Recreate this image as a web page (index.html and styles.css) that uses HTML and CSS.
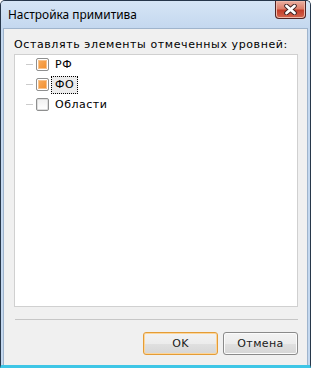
FILE: index.html
```html
<html>
    <head>
        <link rel="stylesheet" href="styles.css">
    </head>
    <body>
        <div class="window">
            <div class="titlebar">
                <div class="caption">Настройка примитива</div>
                <div class="close" title="close">
                    <svg width="15" height="11" viewBox="0 0 15 11">
                        <path d="M3.5 2 L11.5 9 M11.5 2 L3.5 9" stroke="#3d2222" stroke-width="4.6" stroke-linecap="round"/>
                        <path d="M3.5 2 L11.5 9 M11.5 2 L3.5 9" stroke="#ffffff" stroke-width="2.8" stroke-linecap="round"/>
                    </svg>
                </div>
            </div>
            <div class="client">
                <div class="label">Оставлять элементы отмеченных уровней:</div>
                <div class="tree">
                    <div class="node">
                        <span class="branch"></span>
                        <span class="check checked"></span>
                        <span class="text">РФ</span>
                    </div>
                    <div class="node">
                        <span class="branch"></span>
                        <span class="check checked"></span>
                        <span class="text focused">ФО</span>
                    </div>
                    <div class="node">
                        <span class="branch"></span>
                        <span class="check"></span>
                        <span class="text">Области</span>
                    </div>
                </div>
                <div class="separator"></div>
                <div class="buttons">
                    <input type="button" class="btn default" value="OK">
                    <input type="button" class="btn" value="Отмена">
                </div>
            </div>
        </div>
    </body>
</html>
```

FILE: styles.css
```css
:root {
    --c-frame: #c4d8ef;
    --c-frame-dark: #27374a;
    --c-client: #f0f0f0;
    --c-line: #d0d0d0;
    --f-ui: "DejaVu Sans", "Noto Sans", sans-serif;
}
html, body {
    margin: 0;
    padding: 0;
}

body {
    background-color: #ffffff;
}

.window {
    box-sizing: border-box;
    width: 311px;
    height: 368px;
    display: flex;
    flex-direction: column;
    background: var(--c-frame);
    border: 1px solid var(--c-frame-dark);
    border-bottom: 3px solid #3ec6e6;
    border-radius: 5px 5px 0 0;
    padding: 0 2px;
}

.titlebar {
    display: flex;
    height: 27px;
    flex-shrink: 0;
    background: linear-gradient(#d6e5f5, #c4d8ef);
    margin: 0 -2px;
    padding: 0 4px 0 7px;
    border-radius: 4px 4px 0 0;
}
.titlebar .caption {
    flex-grow: 1;
    font-family: "Noto Sans", "Open Sans", sans-serif;
    font-size: 11.9px;
    line-height: 26px;
    color: #000000;
}
.titlebar .close {
    box-sizing: border-box;
    width: 31px;
    height: 18px;
    display: flex;
    align-items: center;
    justify-content: center;
    border: 1px solid #4f2424;
    border-top: 0;
    border-radius: 0 0 4px 4px;
    background: linear-gradient(#eab0a2 0%, #dc7f6a 45%, #c43f2b 55%, #d2664f 100%);
    box-shadow: inset 0 0 0 1px #efb9aa;
}

.client {
    flex-grow: 1;
    display: flex;
    flex-direction: column;
    background: var(--c-client);
    border: 1px solid #9fb4cc;
    border-bottom: 0;
    padding: 9px 9px 10px 10px;
    font-family: var(--f-ui);
    font-size: 11px;
    color: #000000;
}

.label {
    height: 13px;
    line-height: 13px;
    margin-bottom: 3px;
    letter-spacing: 0.6px;
}

.tree {
    height: 251px;
    background: #ffffff;
    border: 1px solid var(--c-line);
}
.tree .node {
    display: flex;
    align-items: flex-start;
    height: 20px;
}
.tree .branch {
    width: 7px;
    height: 0;
    margin: 9px 0 0 11px;
    border-top: 1px solid #cccccc;
}
.tree .check {
    box-sizing: border-box;
    width: 13px;
    height: 13px;
    margin: 3px 0 0 3px;
    border: 1px solid #8e8f8f;
    border-radius: 2px;
    background: linear-gradient(#f0f0f0, #ffffff);
    box-shadow: inset 0 0 0 1px #dedede;
}
.tree .check.checked {
    background: linear-gradient(135deg, #fbb064, #f08a26);
    box-shadow: inset 0 0 0 1px #ffffff, inset 0 0 0 2px #f7c28c;
}
.tree .text {
    box-sizing: border-box;
    margin: 1px 0 0 2px;
    padding: 0 3px;
    height: 18px;
    line-height: 16px;
    letter-spacing: 0.5px;
    border: 1px dotted transparent;
}
.tree .text.focused {
    background: #ececec;
    border-color: #000000;
}

.separator {
    margin: 12px 0 0 1px;
    border-top: 1px solid #c6c6c6;
}

.buttons {
    display: flex;
    justify-content: flex-end;
    gap: 5px;
    margin-top: 12px;
}
.btn {
    box-sizing: border-box;
    width: 75px;
    height: 23px;
    padding: 0;
    margin: 0;
    font-family: var(--f-ui);
    font-size: 11px;
    font-weight: normal;
    letter-spacing: 0.4px;
    color: #1a1a1a;
    border: 1px solid #8a8a8a;
    border-radius: 3px;
    background: linear-gradient(#f3f3f3 0%, #ececec 50%, #e0e0e0 51%, #d6d6d6 100%);
    box-shadow: inset 0 0 0 1px #fbfbfb;
}
.btn.default {
    border-color: #e49c36;
    box-shadow: inset 0 0 0 1px #fcd69c;
}
```
